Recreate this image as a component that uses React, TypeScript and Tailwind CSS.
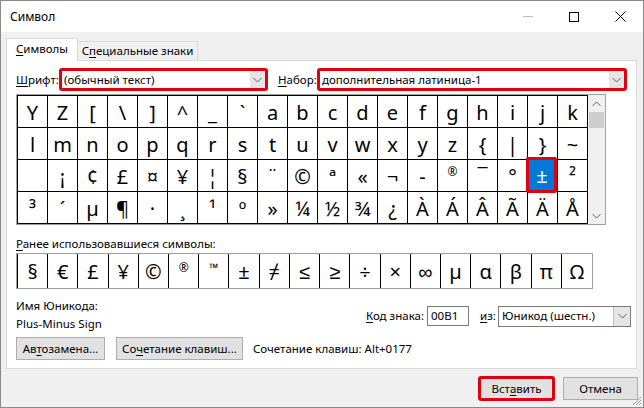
import React from "react";

const row1 = "YZ[\\]^_`abcdefghijk".split("");
const row2 = "lmnopqrstuvwxyz{|}~".split("");
const row3 = ["\u00A0", "¡", "¢", "£", "¤", "¥", "¦", "§", "¨", "©", "ª", "«", "¬", "-", "®", "¯", "°", "±", "²"];
const row4 = ["³", "´", "µ", "¶", "·", "¸", "¹", "º", "»", "¼", "½", "¾", "¿", "À", "Á", "Â", "Ã", "Ä", "Å"];
const recent = ["§", "€", "£", "¥", "©", "®", "™", "±", "≠", "≤", "≥", "÷", "×", "∞", "µ", "α", "β", "π", "Ω"];

function Chevron({ up = false }: { up?: boolean }) {
  return (
    <svg width="9" height="6" viewBox="0 0 9 6">
      <polyline
        points={up ? "0.5,5 4.5,1 8.5,5" : "0.5,1 4.5,5 8.5,1"}
        fill="none"
        stroke="#606060"
        strokeWidth="1"
      />
    </svg>
  );
}

function U({ children }: { children: React.ReactNode }) {
  return <span className="underline underline-offset-[2px] decoration-1">{children}</span>;
}

function Combo({ text, width }: { text: string; width: string }) {
  return (
    <div className={`${width} h-[23px] border-[3px] border-[#e00010] rounded-[3px] flex bg-white`}>
      <div className="flex-1 flex items-center pl-[2px] whitespace-nowrap">{text}</div>
      <div className="w-[15px] bg-[#e5e5e5] flex items-center justify-center">
        <Chevron />
      </div>
    </div>
  );
}

function Cell({ ch, selected = false }: { ch: string; selected?: boolean }) {
  const small = ch === "®";
  return (
    <div className="relative w-[30px] h-[32px] border-r border-b border-black flex items-center justify-center">
      {selected ? (
        <>
          <div className="absolute inset-0 right-px bottom-px bg-[#0078d7] flex items-center justify-center text-white text-[20px] leading-none pt-[2px]">
            {ch}
          </div>
          <div className="absolute -top-[3px] -left-[2px] right-0 -bottom-[2px] border-[3px] border-[#e00010] rounded-[2px]" />
        </>
      ) : small ? (
        <span className="text-[12px] leading-none self-start mt-[6px]">{ch}</span>
      ) : (
        <span className="text-[20px] leading-none pt-[2px]">{ch}</span>
      )}
    </div>
  );
}

export default function App() {
  return (
    <div className="w-[644px] h-[408px] bg-[#f0f0f0] border border-[#8a8a8a] font-['Noto_Sans',sans-serif] text-[11.5px] text-black flex flex-col overflow-hidden relative leading-none">
      {/* title bar */}
      <div className="h-[31px] bg-white flex items-center shrink-0">
        <span className="ml-[9px] text-[12px]">Символ</span>
        <div className="ml-auto flex h-full">
          <div className="w-[46px] flex items-center justify-center">
            <div className="w-[10px] h-px bg-[#bdbdbd]" />
          </div>
          <div className="w-[46px] flex items-center justify-center">
            <div className="w-[10px] h-[10px] border border-black" />
          </div>
          <div className="w-[46px] flex items-center justify-center">
            <svg width="11" height="11" viewBox="0 0 11 11">
              <path d="M0.5 0.5 L10.5 10.5 M10.5 0.5 L0.5 10.5" stroke="#000" strokeWidth="1" />
            </svg>
          </div>
        </div>
      </div>

      {/* tabs */}
      <div className="h-[28px] flex items-end pl-[5px] shrink-0">
        <div className="relative z-10 w-[72px] h-[23px] -mb-px bg-white border-l border-t border-r border-[#d9d9d9] flex items-center justify-center pb-[2px]">
          <span>
            <U>С</U>имволы
          </span>
        </div>
        <div className="w-[120px] h-[19px] bg-[#f0f0f0] border-t border-r border-[#d9d9d9] flex items-center justify-center">
          <span>
            С<U>п</U>ециальные знаки
          </span>
        </div>
      </div>

      {/* panel */}
      <div className="ml-[5px] w-[631px] h-[309px] bg-white border border-[#d9d9d9] shrink-0 flex flex-col">
        {/* font / subset row */}
        <div className="mt-[7px] pl-[9px] flex items-center h-[23px]">
          <div className="w-[43px]">
            <U>Ш</U>рифт:
          </div>
          <Combo text="(обычный текст)" width="w-[209px]" />
          <div className="ml-[10px] w-[39px]">
            <U>Н</U>абор:
          </div>
          <Combo text="дополнительная латиница-1" width="w-[310px]" />
        </div>

        {/* character grid */}
        <div className="mt-[3px] ml-[9px] w-[590px] h-[131px] border border-[#a0a0a0] flex">
          <div className="w-[571px] border-l border-t border-black grid grid-cols-[repeat(19,30px)]">
            {row1.map((c, i) => (
              <Cell key={"a" + i} ch={c} />
            ))}
            {row2.map((c, i) => (
              <Cell key={"b" + i} ch={c} />
            ))}
            {row3.map((c, i) => (
              <Cell key={"c" + i} ch={c} selected={i === 17} />
            ))}
            {row4.map((c, i) => (
              <Cell key={"d" + i} ch={c} />
            ))}
          </div>
          <div className="w-[17px] bg-[#f0f0f0] flex flex-col items-center">
            <div className="h-[17px] flex items-center justify-center">
              <Chevron up />
            </div>
            <div className="w-[15px] h-[16px] bg-[#cdcdcd]" />
            <div className="flex-1" />
            <div className="h-[17px] flex items-center justify-center">
              <Chevron />
            </div>
          </div>
        </div>

        {/* recent */}
        <div className="mt-[11px] pl-[9px] h-[16px] leading-[16px]">
          <U>Р</U>анее использовавшиеся символы:
        </div>
        <div className="mt-px ml-[9px] w-[577px] h-[36px] border border-[#a0a0a0] flex">
          <div className="flex-1 border-l border-black grid grid-cols-[repeat(19,minmax(0,1fr))]">
            {recent.map((c, i) => {
              const small = c === "®" || c === "™";
              return (
                <div
                  key={i}
                  className={`flex items-center justify-center ${i < 18 ? "border-r border-black" : ""}`}
                >
                  {small ? (
                    <span className="text-[12px] leading-none self-start mt-[8px]">{c}</span>
                  ) : (
                    <span className="text-[20px] leading-none pt-[2px]">{c}</span>
                  )}
                </div>
              );
            })}
          </div>
        </div>

        {/* unicode info */}
        <div className="mt-[8px] flex pl-[9px] pr-[5px]">
          <div className="flex flex-col">
            <div className="h-[18px] leading-[18px]">Имя Юникода:</div>
            <div className="h-[18px] leading-[18px]">Plus-Minus Sign</div>
          </div>
          <div className="ml-auto mt-[9px] h-[20px] flex items-center">
            <div>
              <U>К</U>од знака:
            </div>
            <div className="ml-[3px] w-[42px] h-[20px] border border-[#7a7a7a] bg-white flex items-center pl-[3px]">
              00B1
            </div>
            <div className="ml-[11px] w-[18px]">
              <U>и</U>з:
            </div>
            <div className="w-[133px] h-[21px] border border-[#7a7a7a] bg-white flex">
              <div className="flex-1 flex items-center pl-[3px]">Юникод (шестн.)</div>
              <div className="w-[17px] bg-[#e5e5e5] border-l border-[#c0c0c0] flex items-center justify-center">
                <Chevron />
              </div>
            </div>
          </div>
        </div>

        {/* buttons row */}
        <div className="mt-[4px] pl-[9px] flex items-center h-[23px]">
          <div className="w-[89px] h-[23px] bg-[#e1e1e1] border border-[#adadad] flex items-center justify-center">
            <span>
              Ав<U>т</U>озамена...
            </span>
          </div>
          <div className="ml-[11px] w-[127px] h-[23px] bg-[#e1e1e1] border border-[#adadad] flex items-center justify-center">
            <span>
              Со<U>ч</U>етание клавиш...
            </span>
          </div>
          <div className="ml-[10px]">Сочетание клавиш: Alt+0177</div>
        </div>
      </div>

      {/* dialog buttons */}
      <div className="mt-[8px] flex justify-end pr-[5px] h-[23px] shrink-0">
        <div className="relative w-[75px] h-[23px] bg-[#e1e1e1] border border-[#0078d7] flex items-center justify-center">
          <span>
            Вст<U>а</U>вить
          </span>
          <div className="absolute -inset-[2px] border-[3px] border-[#e00010] rounded-[3px]" />
        </div>
        <div className="ml-[9px] w-[75px] h-[23px] bg-[#e1e1e1] border border-[#adadad] flex items-center justify-center">
          Отмена
        </div>
      </div>

      {/* resize grip */}
      <svg className="absolute right-[1px] bottom-[1px]" width="11" height="11" viewBox="0 0 11 11">
        <path d="M10 2 L2 10 M10 5 L5 10 M10 8 L8 10" stroke="#a0a0a0" strokeWidth="1" />
      </svg>
    </div>
  );
}
